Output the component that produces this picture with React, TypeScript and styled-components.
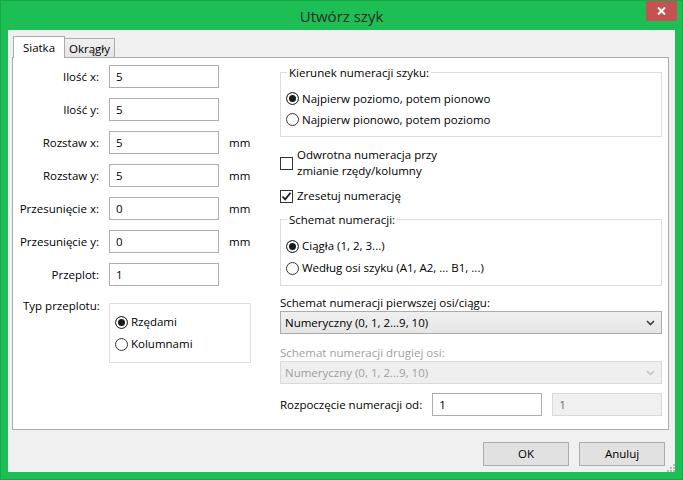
import React from 'react';
import styled, { createGlobalStyle } from 'styled-components';

const FONT = `"Open Sans", "Noto Sans", "Liberation Sans", sans-serif`;

const GlobalStyle = createGlobalStyle`
  html, body { margin: 0; padding: 0; background: #1dbe54; }
  body { font-family: ${FONT}; font-size: 11.5px; color: #000; }
  * { box-sizing: border-box; }
`;

const Window = styled.div`
  width: 683px;
  height: 480px;
  background: #1dbe54;
  border: 1px solid #18a848;
  display: flex;
  flex-direction: column;
`;

const TitleBar = styled.div`
  height: 29px;
  display: grid;
  grid-template-columns: 1fr auto 1fr;
  align-items: center;
`;

const Title = styled.div`
  grid-column: 2;
  font-size: 15px;
  color: #2a2a2a;
  line-height: 20px;
  padding-top: 1px;
`;

const CloseButton = styled.div`
  grid-column: 3;
  justify-self: end;
  align-self: start;
  width: 31px;
  height: 20px;
  margin-right: 5px;
  background: #c75050;
  display: flex;
  align-items: center;
  justify-content: center;
`;

const Client = styled.div`
  flex: 1;
  margin: 0 7px 7px 7px;
  background: #f0f0f0;
  display: flex;
  flex-direction: column;
`;

const TabStrip = styled.div`
  height: 27px;
  display: flex;
  align-items: flex-end;
  padding-left: 5px;
`;

const Tab = styled.div<{ $active?: boolean; $w: number }>`
  position: relative;
  z-index: ${(p) => (p.$active ? 1 : 0)};
  width: ${(p) => p.$w}px;
  height: ${(p) => (p.$active ? 22 : 19)}px;
  margin-bottom: ${(p) => (p.$active ? -1 : 0)}px;
  margin-left: ${(p) => (p.$active ? 0 : -1)}px;
  border: 1px solid #acacac;
  border-bottom: none;
  background: ${(p) => (p.$active ? '#ffffff' : 'linear-gradient(#f0f0f0, #e5e5e5)')};
  display: flex;
  align-items: center;
  justify-content: center;
  padding-top: ${(p) => (p.$active ? 0 : 2)}px;
  line-height: 16px;
  white-space: nowrap;
`;

const Pane = styled.div`
  flex: 1;
  margin: 0 6px 0 4px;
  background: #ffffff;
  border: 1px solid #acacac;
  display: grid;
  grid-template-columns: 267px 382px;
  align-items: start;
`;

const FormGrid = styled.div`
  display: grid;
  grid-template-columns: 86px 110px auto;
  grid-template-rows: repeat(7, 23px) auto;
  column-gap: 10px;
  row-gap: 10px;
  align-items: center;
  padding-top: 7px;
`;

const FieldLabel = styled.div`
  text-align: right;
  white-space: nowrap;
  line-height: 16px;
`;

const SideLabel = styled.div`
  grid-column: 1;
  align-self: start;
  padding-left: 10px;
  margin-top: 2px;
  white-space: nowrap;
  line-height: 16px;
`;

const Unit = styled.div`
  line-height: 16px;
`;

const TextBox = styled.input<{ $disabled?: boolean }>`
  width: 110px;
  height: 23px;
  margin: 0;
  padding: 0 6px;
  border: 1px solid ${(p) => (p.$disabled ? '#d9d9d9' : '#abadb3')};
  background: ${(p) => (p.$disabled ? '#f0f0f0' : '#ffffff')};
  color: ${(p) => (p.$disabled ? '#6d6d6d' : '#000')};
  font-family: ${FONT};
  font-size: 11.5px;
  outline: none;
`;

const GroupBox = styled.div<{ $mt: number; $pb: number }>`
  margin-top: ${(p) => p.$mt}px;
  border: 1px solid #dcdcdc;
  padding: 0 5px ${(p) => p.$pb}px 5px;
  display: flex;
  flex-direction: column;
`;

const PlainGroup = styled.div`
  grid-column: 2 / span 2;
  align-self: start;
  width: 142px;
  margin-top: 7px;
  border: 1px solid #dcdcdc;
  padding: 7px 5px 7px 5px;
  display: flex;
  flex-direction: column;
`;

const GroupTitle = styled.div`
  align-self: flex-start;
  margin: -8px 0 0 1px;
  padding: 0 2px;
  background: #ffffff;
  line-height: 16px;
`;

const OptionList = styled.div<{ $row: number; $pt?: number }>`
  display: flex;
  flex-direction: column;
  padding-top: ${(p) => p.$pt ?? 7}px;
  & > * { height: ${(p) => p.$row}px; }
`;

const OptionRow = styled.label<{ $mt?: number }>`
  display: flex;
  align-items: center;
  gap: 3px;
  line-height: 16px;
  white-space: nowrap;
  margin-top: ${(p) => p.$mt ?? 0}px;
`;

const RadioDot = styled.span<{ $checked?: boolean }>`
  flex: none;
  width: 13px;
  height: 13px;
  border-radius: 50%;
  border: 1px solid #333333;
  background: ${(p) => (p.$checked ? '#1a1a1a' : '#ffffff')};
  box-shadow: inset 0 0 0 2px #ffffff;
`;

const CheckBox = styled.span`
  flex: none;
  width: 13px;
  height: 13px;
  border: 1px solid #333333;
  background: #ffffff;
  display: flex;
  align-items: center;
  justify-content: center;
`;

const CheckText = styled.span`
  margin-left: 1px;
`;

const RightColumn = styled.div`
  display: flex;
  flex-direction: column;
`;

const PlainLabel = styled.div<{ $mt: number; $disabled?: boolean }>`
  margin-top: ${(p) => p.$mt}px;
  line-height: 16px;
  color: ${(p) => (p.$disabled ? '#a0a0a0' : '#000')};
`;

const ComboBox = styled.div<{ $disabled?: boolean }>`
  height: 23px;
  border: 1px solid ${(p) => (p.$disabled ? '#d9d9d9' : '#acacac')};
  background: ${(p) => (p.$disabled ? '#efefef' : 'linear-gradient(#f0f0f0, #e5e5e5)')};
  color: ${(p) => (p.$disabled ? '#a0a0a0' : '#000')};
  display: flex;
  align-items: center;
  justify-content: space-between;
  padding: 0 6px 0 4px;
  line-height: 16px;
`;

const StartRow = styled.div`
  margin-top: 9px;
  display: grid;
  grid-template-columns: 1fr 110px 110px;
  column-gap: 10px;
  align-items: center;
  line-height: 16px;
  white-space: nowrap;
`;

const ButtonRow = styled.div`
  height: 42px;
  display: flex;
  justify-content: flex-end;
  align-items: flex-start;
  padding-top: 12px;
  gap: 10px;
`;

const Button = styled.div`
  width: 86px;
  height: 24px;
  border: 1px solid #adadad;
  background: #e1e1e1;
  display: flex;
  align-items: center;
  justify-content: center;
  line-height: 16px;
`;

const Grip = styled.svg`
  align-self: flex-end;
  margin-left: -9px;
`;

const Radio = ({ checked, children }: { checked?: boolean; children: React.ReactNode }) => (
  <OptionRow>
    <RadioDot $checked={checked} />
    <span>{children}</span>
  </OptionRow>
);

const Chevron = ({ color }: { color: string }) => (
  <svg width="9" height="6" viewBox="0 0 9 6">
    <path d="M1 1 L4.5 4.5 L8 1" fill="none" stroke={color} strokeWidth="1.6" />
  </svg>
);

const rows: [string, string, boolean][] = [
  ['Ilość x:', '5', false],
  ['Ilość y:', '5', false],
  ['Rozstaw x:', '5', true],
  ['Rozstaw y:', '5', true],
  ['Przesunięcie x:', '0', true],
  ['Przesunięcie y:', '0', true],
  ['Przeplot:', '1', false],
];

export default function App() {
  return (
    <>
      <GlobalStyle />
      <Window>
        <TitleBar>
          <Title>Utwórz szyk</Title>
          <CloseButton>
            <svg width="9" height="8" viewBox="0 0 9 8">
              <path d="M1 0.5 L8 7.5 M8 0.5 L1 7.5" stroke="#ffffff" strokeWidth="2" />
            </svg>
          </CloseButton>
        </TitleBar>
        <Client>
          <TabStrip>
            <Tab $active $w={52}>Siatka</Tab>
            <Tab $w={51}>Okrągły</Tab>
          </TabStrip>
          <Pane>
            <FormGrid>
              {rows.map(([label, value, unit]) => (
                <React.Fragment key={label}>
                  <FieldLabel>{label}</FieldLabel>
                  <TextBox readOnly value={value} />
                  {unit ? <Unit>mm</Unit> : <span />}
                </React.Fragment>
              ))}
              <SideLabel>Typ przeplotu:</SideLabel>
              <PlainGroup>
                <OptionList $row={22} $pt={0}>
                  <Radio checked>Rzędami</Radio>
                  <Radio>Kolumnami</Radio>
                </OptionList>
              </PlainGroup>
            </FormGrid>
            <RightColumn>
              <GroupBox $mt={14} $pb={6}>
                <GroupTitle>Kierunek numeracji szyku:</GroupTitle>
                <OptionList $row={21}>
                  <Radio checked>Najpierw poziomo, potem pionowo</Radio>
                  <Radio>Najpierw pionowo, potem poziomo</Radio>
                </OptionList>
              </GroupBox>
              <OptionRow $mt={10}>
                <CheckBox />
                <CheckText>
                  Odwrotna numeracja przy
                  <br />
                  zmianie rzędy/kolumny
                </CheckText>
              </OptionRow>
              <OptionRow $mt={9}>
                <CheckBox>
                  <svg width="11" height="11" viewBox="0 0 11 11">
                    <path d="M1.5 5.5 L4.2 8.3 L9.5 1.8" fill="none" stroke="#1a1a1a" strokeWidth="1.8" />
                  </svg>
                </CheckBox>
                <CheckText>Zresetuj numerację</CheckText>
              </OptionRow>
              <GroupBox $mt={15} $pb={6}>
                <GroupTitle>Schemat numeracji:</GroupTitle>
                <OptionList $row={22}>
                  <Radio checked>Ciągła (1, 2, 3...)</Radio>
                  <Radio>Według osi szyku (A1, A2, ... B1, ...)</Radio>
                </OptionList>
              </GroupBox>
              <PlainLabel $mt={9}>Schemat numeracji pierwszej osi/ciągu:</PlainLabel>
              <ComboBox>
                <span>Numeryczny (0, 1, 2...9, 10)</span>
                <Chevron color="#404040" />
              </ComboBox>
              <PlainLabel $mt={11} $disabled>
                Schemat numeracji drugiej osi:
              </PlainLabel>
              <ComboBox $disabled>
                <span>Numeryczny (0, 1, 2...9, 10)</span>
                <Chevron color="#c4c4c4" />
              </ComboBox>
              <StartRow>
                <span>Rozpoczęcie numeracji od:</span>
                <TextBox readOnly value="1" />
                <TextBox readOnly value="1" $disabled />
              </StartRow>
            </RightColumn>
          </Pane>
          <ButtonRow>
            <Button>OK</Button>
            <Button>Anuluj</Button>
            <Grip width="9" height="9" viewBox="0 0 9 9">
              <g fill="#b8b8b8">
                <rect x="7" y="1" width="2" height="2" />
                <rect x="4" y="4" width="2" height="2" />
                <rect x="7" y="4" width="2" height="2" />
                <rect x="1" y="7" width="2" height="2" />
                <rect x="4" y="7" width="2" height="2" />
                <rect x="7" y="7" width="2" height="2" />
              </g>
            </Grip>
          </ButtonRow>
        </Client>
      </Window>
    </>
  );
}
